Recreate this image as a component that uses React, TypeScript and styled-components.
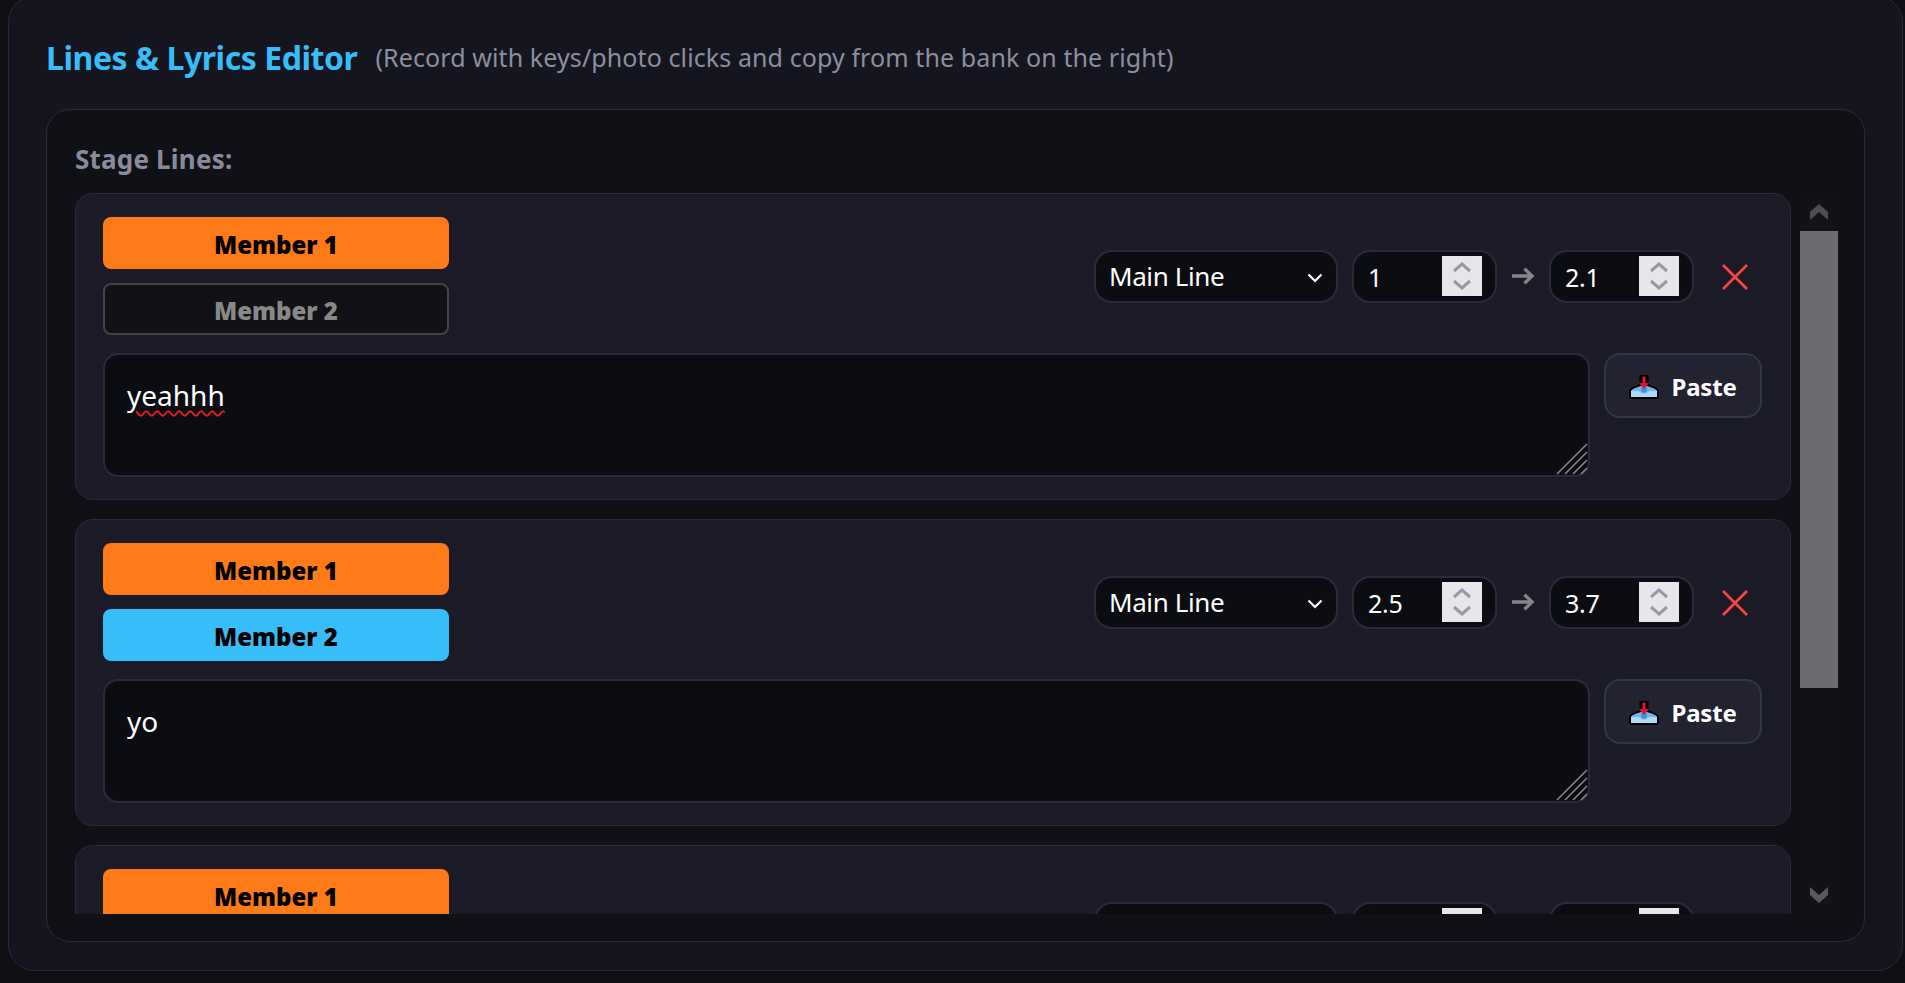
import React from "react";
import styled, { createGlobalStyle } from "styled-components";

const Global = createGlobalStyle`
  html, body { margin: 0; padding: 0; height: 100%; overflow: hidden; background: #0f0f14; }
  #root { height: 983px; overflow: hidden; }
  * { box-sizing: border-box; }
`;

const FONT = `"Noto Sans", "Open Sans", "Liberation Sans", sans-serif`;

const Page = styled.div`
  height: 983px;
  padding: 0 2px 0 8px;
  font-family: ${FONT};
  color: #fff;
`;

const Panel = styled.section`
  height: 975px;
  margin-top: -4px;
  padding: 4px 37px 28px 37px;
  background: #14151e;
  border: 1px solid #2a2a3c;
  border-radius: 26px;
  display: flex;
  flex-direction: column;
`;

const Header = styled.header`
  height: 108px;
  display: flex;
  align-items: center;
  gap: 18px;
  padding-top: 4px;
`;

const Title = styled.h2`
  margin: 0;
  font-size: 32px;
  font-weight: 700;
  letter-spacing: -0.45px;
  color: #38bdfb;
`;

const Subtitle = styled.span`
  font-size: 25px;
  letter-spacing: 0.1px;
  color: #8e8ea0;
`;

const Inner = styled.div`
  flex: 1;
  min-height: 0;
  padding: 0 26px 27px 28px;
  background: #101116;
  border: 1px solid #2a2a3c;
  border-radius: 24px;
  display: flex;
  flex-direction: column;
`;

const StageLabel = styled.div`
  height: 83px;
  display: flex;
  align-items: center;
  padding-top: 14px;
  font-size: 26px;
  font-weight: 700;
  letter-spacing: 0.2px;
  color: #8a8a9d;
`;

const Scroller = styled.div`
  flex: 1;
  min-height: 0;
  display: flex;
  gap: 9px;
`;

const List = styled.div`
  flex: 1;
  min-width: 0;
  overflow: hidden;
  display: flex;
  flex-direction: column;
  gap: 19px;
`;

const Card = styled.article`
  flex: none;
  height: 307px;
  padding: 23px 28px 23px 27px;
  background: #1a1b26;
  border: 1px solid #2a2a3c;
  border-radius: 18px;
  display: flex;
  flex-direction: column;
  gap: 18px;
`;

const TopRow = styled.div`
  display: flex;
  align-items: center;
  justify-content: space-between;
`;

const Members = styled.div`
  width: 346px;
  display: flex;
  flex-direction: column;
  gap: 14px;
`;

const MemberButton = styled.button<{ $color?: string }>`
  height: 52px;
  width: 100%;
  padding: 2px 0 0;
  border-radius: 8px;
  border: 2px solid ${(p) => p.$color ?? "#444448"};
  background: ${(p) => p.$color ?? "#111116"};
  color: ${(p) => (p.$color ? "#000" : "#888")};
  font-family: ${FONT};
  font-size: 24px;
  font-weight: 900;
  letter-spacing: 0;
`;

const Controls = styled.div`
  display: flex;
  align-items: center;
  gap: 14px;
`;

const SelectWrap = styled.div`
  position: relative;
  width: 244px;
  height: 53px;
`;

const Select = styled.select`
  width: 100%;
  height: 100%;
  appearance: none;
  padding: 0 40px 0 13px;
  background: #0c0d12;
  border: 2px solid #2a2a3c;
  border-radius: 18px;
  color: #fff;
  font-family: ${FONT};
  font-size: 26px;
  letter-spacing: -0.4px;
  outline: none;
`;

const SelectChevron = styled.svg`
  position: absolute;
  right: 15px;
  top: 23px;
  width: 16px;
  height: 10px;
  pointer-events: none;
`;

const NumberBox = styled.div`
  width: 145px;
  height: 53px;
  padding: 0 13px 0 14px;
  background: #0c0d12;
  border: 2px solid #2a2a3c;
  border-radius: 18px;
  display: flex;
  align-items: center;
`;

const NumberInput = styled.input`
  flex: 1;
  min-width: 0;
  padding: 2px 0 0;
  background: transparent;
  border: 0;
  outline: none;
  color: #fff;
  font-family: ${FONT};
  font-size: 25px;
  letter-spacing: -0.3px;
  appearance: textfield;
  &::-webkit-inner-spin-button,
  &::-webkit-outer-spin-button {
    appearance: none;
    margin: 0;
  }
`;

const Spinner = styled.svg`
  flex: none;
  width: 40px;
  height: 40px;
  background: #e8e6eb;
`;

const ArrowIcon = styled.svg`
  flex: none;
  width: 24px;
  height: 20px;
`;

const RemoveButton = styled.button`
  width: 54px;
  height: 54px;
  padding: 2px 0 0;
  background: transparent;
  border: 0;
  display: flex;
  align-items: center;
  justify-content: center;
`;

const BottomRow = styled.div`
  display: flex;
  align-items: flex-start;
  gap: 14px;
`;

const TextBox = styled.div`
  position: relative;
  flex: 1;
  height: 124px;
  padding: 21px 22px;
  background: #0c0d12;
  border: 2px solid #2a2a3c;
  border-radius: 15px;
  color: #fff;
  font-size: 28px;
  line-height: 38px;
  letter-spacing: 0;
`;

const Misspelled = styled.span`
  text-decoration: underline wavy #e51c1c 1.5px;
  text-underline-offset: 4px;
`;

const ResizeGrip = styled.svg`
  position: absolute;
  right: 0;
  bottom: 0;
  width: 33px;
  height: 33px;
`;

const PasteButton = styled.button`
  flex: none;
  width: 158px;
  height: 65px;
  padding: 2px 0 0;
  background: #222230;
  border: 2px solid #34344a;
  border-radius: 16px;
  display: flex;
  align-items: center;
  justify-content: center;
  gap: 12px;
  color: #fff;
  font-family: ${FONT};
  font-size: 24px;
  font-weight: 700;
  letter-spacing: -0.2px;
`;

const Scrollbar = styled.div`
  flex: none;
  width: 38px;
  background: #121317;
  display: flex;
  flex-direction: column;
`;

const ScrollButton = styled.div`
  flex: none;
  height: 38px;
  display: flex;
  align-items: center;
  justify-content: center;
`;

const ScrollThumb = styled.div`
  flex: none;
  height: 457px;
  background: #6c6c71;
`;

const ScrollRest = styled.div`
  flex: 1;
`;

const TrayIcon = () => (
  <svg width="30" height="24" viewBox="0 0 30 24">
    <path
      d="M0 22V16Q1 13 4 12L10.5 9V0H19.5V9L26 12Q29 13 30 16V22Q30 24 28 24H2Q0 24 0 22z"
      fill="#000"
    />
    <path d="M2 22V15.5H28V22z" fill="#aed8f3" />
    <path d="M2 16Q3 14 6 13L12 11H18L24 13Q27 14 28 16H20L17 18.5H13L10 16z" fill="#6fb7ec" />
    <circle cx="15" cy="14.5" r="3" fill="#3f8fdc" />
    <path d="M13.5 1.5h3V8h3.5L15 14 10 8h3.5z" fill="#e8112d" />
  </svg>
);

const SpinnerArrows = () => (
  <Spinner viewBox="0 0 40 40">
    <path d="M12 15l8-7 8 7M12 25l8 7 8-7" fill="none" stroke="#9a98a6" strokeWidth="3" />
  </Spinner>
);

type LineData = {
  id: number;
  second: boolean;
  start: string;
  end: string;
  text: React.ReactNode;
};

const lines: LineData[] = [
  { id: 1, second: false, start: "1", end: "2.1", text: <Misspelled>yeahhh</Misspelled> },
  { id: 2, second: true, start: "2.5", end: "3.7", text: "yo" },
  { id: 3, second: false, start: "4", end: "5", text: "" },
];

const Line = ({ line }: { line: LineData }) => (
  <Card>
    <TopRow>
      <Members>
        <MemberButton $color="#ff7a18">Member 1</MemberButton>
        <MemberButton $color={line.second ? "#38bdfb" : undefined}>Member 2</MemberButton>
      </Members>
      <Controls>
        <SelectWrap>
          <Select defaultValue="main">
            <option value="main">Main Line</option>
            <option value="back">Backing</option>
          </Select>
          <SelectChevron viewBox="0 0 16 10">
            <path d="M1.5 1.5L8 8l6.5-6.5" fill="none" stroke="#fff" strokeWidth="2.2" />
          </SelectChevron>
        </SelectWrap>
        <NumberBox>
          <NumberInput type="number" defaultValue={line.start} />
          <SpinnerArrows />
        </NumberBox>
        <ArrowIcon viewBox="0 0 25 20">
          <path d="M1 10h21M14 2.5l8 7.5-8 7.5" fill="none" stroke="#85858a" strokeWidth="3.4" />
        </ArrowIcon>
        <NumberBox>
          <NumberInput type="number" defaultValue={line.end} />
          <SpinnerArrows />
        </NumberBox>
        <RemoveButton aria-label="Remove">
          <svg width="28" height="28" viewBox="0 0 28 28">
            <path d="M2 2l24 24M26 2L2 26" fill="none" stroke="#ff4444" strokeWidth="2.6" />
          </svg>
        </RemoveButton>
      </Controls>
    </TopRow>
    <BottomRow>
      <TextBox>
        {line.text}
        <ResizeGrip viewBox="0 0 33 33">
          <path
            d="M2 32L32 2M10 32L32 10M18 32L32 18M26 32l6-6"
            fill="none"
            stroke="#85858a"
            strokeWidth="1.6"
          />
        </ResizeGrip>
      </TextBox>
      <PasteButton>
        <TrayIcon />
        Paste
      </PasteButton>
    </BottomRow>
  </Card>
);

export default function App() {
  return (
    <Page>
      <Global />
      <Panel>
        <Header>
          <Title>Lines &amp; Lyrics Editor</Title>
          <Subtitle>(Record with keys/photo clicks and copy from the bank on the right)</Subtitle>
        </Header>
        <Inner>
          <StageLabel>Stage Lines:</StageLabel>
          <Scroller>
            <List>
              {lines.map((l) => (
                <Line key={l.id} line={l} />
              ))}
            </List>
            <Scrollbar>
              <ScrollButton>
                <svg width="18" height="16" viewBox="0 0 18 16">
                  <path d="M0 16V8l9-8 9 8v8L9 8z" fill="#4c4c51" />
                </svg>
              </ScrollButton>
              <ScrollThumb />
              <ScrollRest />
              <ScrollButton>
                <svg width="18" height="16" viewBox="0 0 18 16">
                  <path d="M0 0v8l9 8 9-8V0L9 8z" fill="#5a5a5f" />
                </svg>
              </ScrollButton>
            </Scrollbar>
          </Scroller>
        </Inner>
      </Panel>
    </Page>
  );
}
